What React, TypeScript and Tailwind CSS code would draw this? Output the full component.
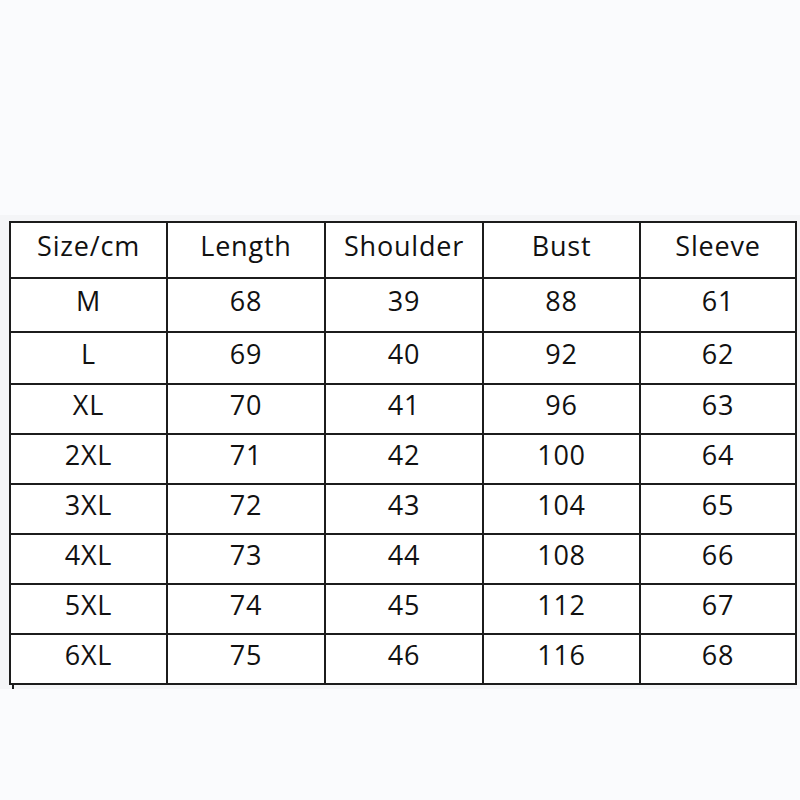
import React from "react";

const header = ["Size/cm", "Length", "Shoulder", "Bust", "Sleeve"];
const rows = [
  ["M", "68", "39", "88", "61"],
  ["L", "69", "40", "92", "62"],
  ["XL", "70", "41", "96", "63"],
  ["2XL", "71", "42", "100", "64"],
  ["3XL", "72", "43", "104", "65"],
  ["4XL", "73", "44", "108", "66"],
  ["5XL", "74", "45", "112", "67"],
  ["6XL", "75", "46", "116", "68"],
];

export default function App() {
  const cells = [header, ...rows];
  return (
    <div
      className="w-[800px] h-[800px] bg-[#fafbfd] flex flex-col"
      style={{ fontFamily: "'Open Sans', 'Liberation Sans', sans-serif" }}
    >
      <div className="h-[215px]" />
      <div className="bg-[#f4f5f7] pt-[6px] pb-[4px]">
        <div className="relative ml-[9px] w-[788px]">
          <div className="grid grid-cols-[155px_156px_156px_155px_154px] grid-rows-[54px_52px_50px_48px_48px_48px_48px_48px_48px] gap-[2px] p-[2px] bg-[#1c1c1c]">
            {cells.flat().map((t, i) => (
              <div
                key={i}
                className="bg-white flex items-center justify-center pb-[9px] text-[27px] font-medium tracking-[0.8px] text-[#111111] leading-none"
              >
                {t}
              </div>
            ))}
          </div>
          <div className="absolute left-[3px] top-full w-[2px] h-[4px] bg-[#1c1c1c]" />
        </div>
      </div>
    </div>
  );
}
